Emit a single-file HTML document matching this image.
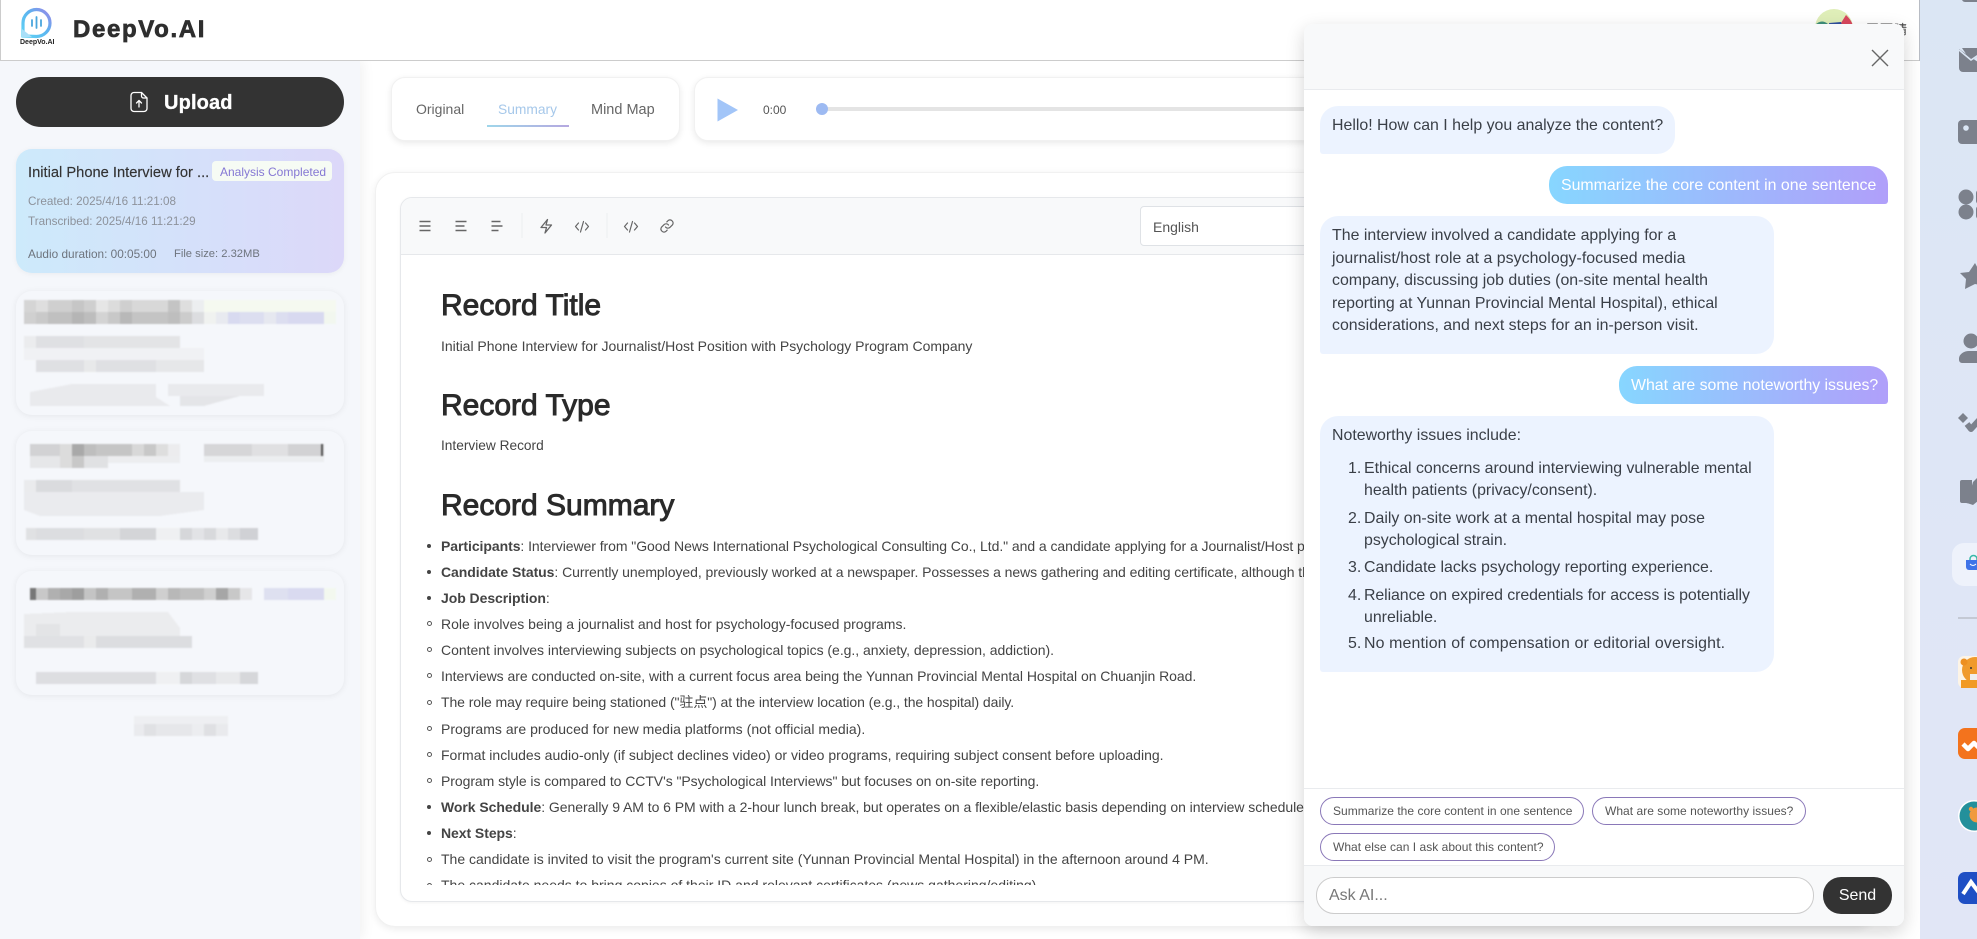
<!DOCTYPE html>
<html lang="en"><head><meta charset="utf-8"><title>DeepVo.AI</title>
<style>
*{box-sizing:border-box}
html,body{margin:0;padding:0;width:1977px;height:939px;overflow:hidden;background:#fff;font-family:"Liberation Sans","Noto Sans CJK SC",sans-serif;color:#333}
.a{position:absolute}
.t{position:absolute;white-space:nowrap}
b{font-weight:700}
.h{left:441px;font-size:30px;font-weight:400;color:#2a2a2a;-webkit-text-stroke:.95px #2a2a2a;line-height:36px;height:36px}
.l{left:39px;font-size:14px;line-height:26px;height:26px;color:#444;letter-spacing:-.06px}
.d{position:absolute;left:25px;width:4px;height:4px;border-radius:50%;background:#444}
.o{position:absolute;left:25px;width:5px;height:5px;border-radius:50%;border:1px solid #555}
.m{font-size:15.900px;line-height:22.5px;height:22.5px;color:#3a3f47}
.bot{position:absolute;left:1320px;background:#ecf3ff;border-radius:18px 18px 18px 3px}
.usr{position:absolute;right:89px;height:38px;background:linear-gradient(90deg,#87d6ff,#b09ffa);border-radius:18px 18px 3px 18px;color:#fff;font-size:15.900px;line-height:40px;padding:0 12px;white-space:nowrap}
.chip{position:absolute;height:28px;border:1px solid #8a78b8;border-radius:14px;font-size:12px;line-height:26px;padding:0 12px;color:#555;background:#fff;white-space:nowrap;letter-spacing:.03px}
</style></head><body>

<!-- page -->
<div class="a" style="left:0;top:0;width:1920px;height:939px;background:#fff"></div>

<!-- sidebar -->
<div class="a" style="left:0;top:60px;width:360px;height:879px;background:#f5f7fb;box-shadow:3px 0 12px rgba(0,0,0,.06)"></div>

<!-- header -->
<div class="a" style="left:0;top:0;width:1920px;height:61px;background:#fff;border:1px solid #ccc;border-top:0"></div>

<svg class="a" style="left:20px;top:7px" width="34" height="32" viewBox="0 0 34 32">
<defs><linearGradient id="lg" x1="0" y1="1" x2="1" y2="0"><stop offset="0" stop-color="#5fd4f5"/><stop offset=".55" stop-color="#5cb4ef"/><stop offset="1" stop-color="#9a86e8"/></linearGradient></defs>
<path d="M3 29V16A13.5 13.5 0 1 1 16.500 29.500Z" fill="#fff" stroke="url(#lg)" stroke-width="3.200"/>
<path d="M2 22L12 30H2Z" fill="#a9dff8"/>
<path d="M12 13v6M16.500 10v11M21 13v6" stroke="#4aa6dd" stroke-width="1.800" stroke-linecap="round"/>
</svg>
<div class="t" style="left:20px;top:38px;font-size:7px;font-weight:700;line-height:10px;color:#222">DeepVo.AI</div>
<div class="t" style="left:73px;top:15px;font-size:24px;font-weight:700;line-height:30px;letter-spacing:1.650px;color:#2e2e2e;-webkit-text-stroke:.7px #2e2e2e">DeepVo.AI</div>

<!-- avatar and name -->
<svg class="a" style="left:1815px;top:9px" width="38" height="24" viewBox="0 0 38 24">
<circle cx="19" cy="19" r="19" fill="#dfeeb8"/>
<path d="M0 16C6 10 12 12 17 20V38H0Z" fill="#3f8f7a"/><path d="M26 14L31 6C35 10 38 14 38 19V28H26Z" fill="#d9475d"/><path d="M14 14L26 13L29 24H15Z" fill="#2f4f9f"/>
</svg>
<div class="t" style="left:1866px;top:22px;font-size:13px;line-height:16px;color:#444;letter-spacing:1px">田雨晴</div>

<!-- upload -->
<div class="a" style="left:16px;top:77px;width:328px;height:50px;border-radius:25px;background:#333"></div>
<svg class="a" style="left:129px;top:91px" width="20" height="22" viewBox="0 0 20 22" fill="none" stroke="#fff" stroke-width="1.300" stroke-linecap="round" stroke-linejoin="round">
<path d="M12.500 1.500H5A3 3 0 0 0 2 4.500V17.500A3 3 0 0 0 5 20.500H15A3 3 0 0 0 18 17.500V7Z"/><path d="M12.500 1.500V5A2 2 0 0 0 14.500 7H18"/><path d="M10 16V9.500M7.500 12L10 9.500L12.500 12"/>
</svg>
<div class="t" style="left:164px;top:90px;font-size:20px;font-weight:700;line-height:26px;color:#fff;letter-spacing:.15px;-webkit-text-stroke:.3px #fff">Upload</div>

<!-- selected card -->
<div class="a" style="left:16px;top:149px;width:328px;height:124px;border-radius:16px;background:linear-gradient(90deg,#cdeafb,#dcd8f9);box-shadow:0 1px 6px rgba(0,0,0,.05)"></div>
<div class="t" style="left:28px;top:164px;font-size:14.700px;line-height:18px;color:#333;-webkit-text-stroke:.15px #333">Initial Phone Interview for ...</div>
<div class="a" style="left:212px;top:161px;width:120px;height:20px;background:#f6fbf4;border-radius:4px"></div>
<div class="t" style="left:220px;top:164px;font-size:12px;line-height:16px;color:#8578d4">Analysis Completed</div>
<div class="t" style="left:28px;top:194px;font-size:11.700px;line-height:16px;color:#8d929b">Created: 2025/4/16 11:21:08</div>
<div class="t" style="left:28px;top:214px;font-size:11.700px;line-height:16px;color:#8d929b">Transcribed: 2025/4/16 11:21:29</div>
<div class="t" style="left:28px;top:246px;font-size:11.800px;line-height:16px;color:#6e747d">Audio duration: 00:05:00</div>
<div class="t" style="left:174px;top:246px;font-size:11.200px;line-height:16px;color:#6e747d">File size: 2.32MB</div>

<!-- blurred cards -->
<div class="a" style="left:16px;top:291px;width:328px;height:124px;border-radius:16px;background:#f5f7fb;box-shadow:0 1px 7px rgba(0,0,0,.07)"></div>
<div class="a" style="left:16px;top:431px;width:328px;height:124px;border-radius:16px;background:#f5f7fb;box-shadow:0 1px 7px rgba(0,0,0,.07)"></div>
<div class="a" style="left:16px;top:571px;width:328px;height:124px;border-radius:16px;background:#f5f7fb;box-shadow:0 1px 7px rgba(0,0,0,.07)"></div>
<svg class="a" style="left:0;top:280px;filter:blur(.8px)" width="360" height="470" viewBox="0 280 360 470" shape-rendering="crispEdges">
<g>
<rect x="24" y="300" width="12" height="12" fill="#d5d5d5"/><rect x="36" y="300" width="12" height="12" fill="#dedede"/><rect x="48" y="300" width="24" height="12" fill="#cfcfcf"/><rect x="72" y="300" width="12" height="12" fill="#c6c6c6"/><rect x="84" y="300" width="12" height="12" fill="#cfcfcf"/><rect x="96" y="300" width="12" height="12" fill="#e6e6e6"/><rect x="108" y="300" width="12" height="12" fill="#dcdcdc"/><rect x="120" y="300" width="12" height="12" fill="#cfcfcf"/><rect x="132" y="300" width="36" height="12" fill="#d8d8d8"/><rect x="168" y="300" width="12" height="12" fill="#c4c4c4"/><rect x="180" y="300" width="12" height="12" fill="#dedede"/><rect x="192" y="300" width="12" height="12" fill="#eceef0"/><rect x="204" y="300" width="132" height="12" fill="#f5f9f0"/>
<rect x="24" y="312" width="12" height="12" fill="#d0d0d0"/><rect x="36" y="312" width="12" height="12" fill="#c9c9c9"/><rect x="48" y="312" width="24" height="12" fill="#c0c0c0"/><rect x="72" y="312" width="12" height="12" fill="#b5b5b5"/><rect x="84" y="312" width="12" height="12" fill="#bdbdbd"/><rect x="96" y="312" width="12" height="12" fill="#d3d3d3"/><rect x="108" y="312" width="12" height="12" fill="#c8c8c8"/><rect x="120" y="312" width="12" height="12" fill="#b8b8b8"/><rect x="132" y="312" width="36" height="12" fill="#c4c4c4"/><rect x="168" y="312" width="12" height="12" fill="#bebebe"/><rect x="180" y="312" width="12" height="12" fill="#cccccc"/><rect x="192" y="312" width="12" height="12" fill="#dcdde0"/><rect x="204" y="312" width="12" height="12" fill="#f0f2f0"/><rect x="216" y="312" width="12" height="12" fill="#e8eaf0"/><rect x="228" y="312" width="12" height="12" fill="#d8daf0"/><rect x="240" y="312" width="24" height="12" fill="#dcdef0"/><rect x="264" y="312" width="12" height="12" fill="#e6e8f0"/><rect x="276" y="312" width="12" height="12" fill="#dcdef0"/><rect x="288" y="312" width="36" height="12" fill="#d8d9f0"/><rect x="324" y="312" width="12" height="12" fill="#f2f7ef"/>
<rect x="24" y="336" width="12" height="12" fill="#ebecee"/><rect x="36" y="336" width="48" height="12" fill="#dfe0e3"/><rect x="84" y="336" width="96" height="12" fill="#e3e4e6"/>
<rect x="24" y="348" width="180" height="12" fill="#f0f1f4"/>
<rect x="36" y="360" width="48" height="12" fill="#dfe0e3"/><rect x="84" y="360" width="12" height="12" fill="#e8e9ea"/><rect x="96" y="360" width="60" height="12" fill="#dfe0e3"/><rect x="156" y="360" width="48" height="12" fill="#e6e7e9"/>
<path d="M30 392L72 384H156V397L170 406H30Z" fill="#e9eaed"/><rect x="168" y="384" width="96" height="12" fill="#e9eaed"/><path d="M180 396H240L204 406H180Z" fill="#e4e5e8"/>
</g>
<g>
<rect x="30" y="444" width="30" height="12" fill="#d2d2d4"/><rect x="60" y="444" width="12" height="12" fill="#dcdcdc"/><rect x="72" y="444" width="12" height="12" fill="#a9a9a9"/><rect x="84" y="444" width="12" height="12" fill="#bebebe"/><rect x="96" y="444" width="36" height="12" fill="#c5c5c5"/><rect x="132" y="444" width="12" height="12" fill="#d8d8d8"/><rect x="144" y="444" width="12" height="12" fill="#c8c8c8"/><rect x="156" y="444" width="12" height="12" fill="#dedede"/><rect x="168" y="444" width="12" height="12" fill="#ececee"/>
<rect x="204" y="444" width="48" height="12" fill="#d6d6d8"/><rect x="252" y="444" width="36" height="12" fill="#e0e0e2"/><rect x="288" y="444" width="36" height="12" fill="#d2d2d4"/><rect x="321" y="444" width="2" height="14" fill="#555"/>
<rect x="30" y="456" width="30" height="12" fill="#e6e7e9"/><rect x="60" y="456" width="12" height="12" fill="#dcdcdc"/><rect x="72" y="456" width="12" height="12" fill="#c8c8c8"/><rect x="84" y="456" width="24" height="12" fill="#e0e1e3"/><rect x="108" y="456" width="72" height="7" fill="#ecedef"/><rect x="204" y="456" width="120" height="6" fill="#eceef0"/>
<rect x="24" y="480" width="12" height="12" fill="#eaebed"/><rect x="36" y="480" width="36" height="12" fill="#dadbde"/><rect x="72" y="480" width="108" height="12" fill="#e0e1e4"/>
<path d="M24 492H204V510L160 516H40L24 510Z" fill="#eaebee"/>
<rect x="26" y="528" width="10" height="12" fill="#e0e1e3"/><rect x="36" y="528" width="48" height="12" fill="#dcdde0"/><rect x="84" y="528" width="36" height="12" fill="#e0e1e3"/><rect x="120" y="528" width="36" height="12" fill="#d4d5d8"/><rect x="156" y="528" width="24" height="12" fill="#eff0f2"/><rect x="180" y="528" width="12" height="12" fill="#d6d7da"/><rect x="192" y="528" width="12" height="12" fill="#e2e3e6"/><rect x="204" y="528" width="12" height="12" fill="#d8d9dc"/><rect x="216" y="528" width="12" height="12" fill="#e8e9eb"/><rect x="228" y="528" width="12" height="12" fill="#dcdde0"/><rect x="240" y="528" width="18" height="12" fill="#d0d1d5"/>
</g>
<g>
<rect x="30" y="588" width="6" height="12" fill="#777"/><rect x="36" y="588" width="12" height="12" fill="#c8c8c8"/><rect x="48" y="588" width="12" height="12" fill="#b0b0b0"/><rect x="60" y="588" width="12" height="12" fill="#a8a8a8"/><rect x="72" y="588" width="12" height="12" fill="#9e9e9e"/><rect x="84" y="588" width="12" height="12" fill="#c4c4c4"/><rect x="96" y="588" width="12" height="12" fill="#b0b0b0"/><rect x="108" y="588" width="24" height="12" fill="#c5c5c5"/><rect x="132" y="588" width="24" height="12" fill="#b0b0b0"/><rect x="156" y="588" width="12" height="12" fill="#cfcfcf"/><rect x="168" y="588" width="12" height="12" fill="#b8b8b8"/><rect x="180" y="588" width="24" height="12" fill="#bfbfbf"/><rect x="204" y="588" width="12" height="12" fill="#cfcfcf"/><rect x="216" y="588" width="12" height="12" fill="#a6a6a6"/><rect x="228" y="588" width="12" height="12" fill="#c8c8c8"/><rect x="240" y="588" width="12" height="12" fill="#e6e6e8"/><rect x="264" y="588" width="24" height="12" fill="#dee0f0"/><rect x="288" y="588" width="36" height="12" fill="#d9daf0"/><rect x="324" y="588" width="12" height="12" fill="#f3f8ef"/>
<path d="M24 614L72 612H168L180 628V636H24Z" fill="#ebecee"/><rect x="36" y="624" width="24" height="12" fill="#e3e4e6"/>
<rect x="24" y="636" width="60" height="12" fill="#e0e1e4"/><rect x="84" y="636" width="12" height="12" fill="#eaebec"/><rect x="96" y="636" width="96" height="12" fill="#dcdde0"/>
<rect x="36" y="672" width="120" height="12" fill="#dddee1"/><rect x="156" y="672" width="24" height="12" fill="#eff0f2"/><rect x="180" y="672" width="12" height="12" fill="#d6d7da"/><rect x="192" y="672" width="24" height="12" fill="#dfe0e3"/><rect x="216" y="672" width="24" height="12" fill="#e8e9eb"/><rect x="240" y="672" width="18" height="12" fill="#d6d7da"/>
</g>
<rect x="134" y="716" width="94" height="8" fill="#eeeff2"/><rect x="134" y="724" width="10" height="12" fill="#eaebee"/><rect x="144" y="724" width="12" height="12" fill="#e0e1e4"/><rect x="156" y="724" width="36" height="12" fill="#e6e7ea"/><rect x="192" y="724" width="12" height="12" fill="#ecedf0"/><rect x="204" y="724" width="12" height="12" fill="#dfe0e3"/><rect x="216" y="724" width="12" height="12" fill="#e9eaed"/>
</svg>

<!-- tabs -->
<div class="a" style="left:391px;top:77px;width:289px;height:64px;background:#fff;border-radius:14px;border:1px solid #f1f1f1;box-shadow:0 2px 7px rgba(0,0,0,.09)"></div>
<div class="t" style="left:416px;top:100px;font-size:14px;line-height:18px;color:#666">Original</div>
<div class="t" style="left:498px;top:100.500px;font-size:13.800px;line-height:18px;color:#a6c8ea">Summary</div>
<div class="t" style="left:591px;top:101px;font-size:14.500px;line-height:18px;color:#666">Mind Map</div>
<div class="a" style="left:487px;top:125px;width:82px;height:2px;background:linear-gradient(90deg,#9fd6ea,#b5a8e0)"></div>

<!-- player -->
<div class="a" style="left:694px;top:77px;width:700px;height:64px;background:#fff;border-radius:14px;border:1px solid #f1f1f1;box-shadow:0 2px 7px rgba(0,0,0,.09)"></div>
<svg class="a" style="left:716px;top:97px" width="23" height="26" viewBox="0 0 23 26"><path d="M1.500 1.500V24.500L22 13Z" fill="#a2c5f8"/></svg>
<div class="t" style="left:763px;top:102px;font-size:12px;line-height:16px;color:#555">0:00</div>
<div class="a" style="left:822px;top:107px;width:500px;height:4px;border-radius:2px;background:#e4e4e4"></div>
<div class="a" style="left:816px;top:103px;width:12px;height:12px;border-radius:50%;background:#9dbaf2"></div>

<!-- main card -->
<div class="a" style="left:375px;top:172px;width:1500px;height:755px;background:#fff;border-radius:20px;border:1px solid #f1f1f1;box-shadow:0 2px 8px rgba(0,0,0,.08)"></div>
<div class="a" style="left:400px;top:197px;width:1450px;height:705px;background:#fff;border-radius:12px;border:1px solid #e6e8eb;box-shadow:0 1px 3px rgba(0,0,0,.05)"></div>
<div class="a" style="left:401px;top:198px;width:1448px;height:57px;background:#f8f9fa;border-radius:11px 11px 0 0;border-bottom:1px solid #e6e8eb"></div>
<svg class="a" style="left:402px;top:198px" width="300" height="57" viewBox="402 198 300 57" fill="none" stroke="#666" stroke-width="1.300" stroke-linejoin="round">
<path d="M419.500 221.500H430.500M419.500 226H430.500M419.500 230.500H430.500" stroke-width="1.500"/>
<path d="M455.500 221.500H466.500M455.500 226H464.500M455.500 230.500H466.500" stroke-width="1.500"/>
<path d="M491.500 221.500H500.500M491.500 226H502.500M491.500 230.500H498.500" stroke-width="1.500"/>
<path d="M522 213V238M607 213V238" stroke="#eceef0" stroke-width="1"/>
<path d="M547.500 219.500L541 227.500H546.500L545 233L551.500 225H546Z" stroke-linecap="round"/>
<path d="M578.500 223L575.500 226.500L578.500 230M585.500 223L588.500 226.500L585.500 230M583.500 221.500L580.500 232" stroke-width="1.200" stroke-linecap="round"/>
<path d="M627.500 223L624.500 226.500L627.500 230M634.500 223L637.500 226.500L634.500 230M632.500 221.500L629.500 232" stroke-width="1.200" stroke-linecap="round"/>
<path d="M665.500 227A3 3 0 0 0 670 227.300L672.500 224.800A3.100 3.100 0 0 0 668.200 220.500L666.800 221.900M668.500 225A3 3 0 0 0 664 224.700L661.500 227.200A3.100 3.100 0 0 0 665.800 231.500L667.200 230.100" stroke-width="1.200" stroke-linecap="round"/>
</svg>
<div class="a" style="left:1140px;top:206px;width:300px;height:40px;background:#fff;border:1px solid #dfe2e6;border-radius:4px"></div>
<div class="t" style="left:1153px;top:218px;font-size:14px;line-height:18px;color:#555">English</div>

<div class="t h" style="top:288px">Record Title</div>
<div class="t" style="left:441px;top:337px;font-size:14px;line-height:18px;color:#444;letter-spacing:-.02px">Initial Phone Interview for Journalist/Host Position with Psychology Program Company</div>
<div class="t h" style="top:388px">Record Type</div>
<div class="t" style="left:441px;top:437px;font-size:13.700px;line-height:18px;color:#444">Interview Record</div>
<div class="t h" style="top:488px">Record Summary</div>

<div class="a" style="left:402px;top:529px;width:920px;height:356px;overflow:hidden">
<div class="d" style="top:15px"></div><div class="t l" style="top:4px"><b>Participants</b>: Interviewer from "Good News International Psychological Consulting Co., Ltd." and a candidate applying for a Journalist/Host position.</div>
<div class="d" style="top:41px"></div><div class="t l" style="top:30px"><b>Candidate Status</b>: Currently unemployed, previously worked at a newspaper. Possesses a news gathering and editing certificate, although the certificate has expired.</div>
<div class="d" style="top:67px"></div><div class="t l" style="top:56px"><b>Job Description</b>:</div>
<div class="o" style="top:92px"></div><div class="t l" style="top:82px;letter-spacing:0">Role involves being a journalist and host for psychology-focused programs.</div>
<div class="o" style="top:118px"></div><div class="t l" style="top:108px;letter-spacing:-.03px">Content involves interviewing subjects on psychological topics (e.g., anxiety, depression, addiction).</div>
<div class="o" style="top:144px"></div><div class="t l" style="top:134px;letter-spacing:-.04px">Interviews are conducted on-site, with a current focus area being the Yunnan Provincial Mental Hospital on Chuanjin Road.</div>
<div class="o" style="top:171px"></div><div class="t l" style="top:160px;letter-spacing:-.08px">The role may require being stationed ("驻点") at the interview location (e.g., the hospital) daily.</div>
<div class="o" style="top:197px"></div><div class="t l" style="top:187px;letter-spacing:.03px">Programs are produced for new media platforms (not official media).</div>
<div class="o" style="top:223px"></div><div class="t l" style="top:213px;letter-spacing:.01px">Format includes audio-only (if subject declines video) or video programs, requiring subject consent before uploading.</div>
<div class="o" style="top:249px"></div><div class="t l" style="top:239px">Program style is compared to CCTV's "Psychological Interviews" but focuses on on-site reporting.</div>
<div class="d" style="top:276px"></div><div class="t l" style="top:265px;letter-spacing:-.05px"><b>Work Schedule</b>: Generally 9 AM to 6 PM with a 2-hour lunch break, but operates on a flexible/elastic basis depending on interview schedules.</div>
<div class="d" style="top:302px"></div><div class="t l" style="top:291px"><b>Next Steps</b>:</div>
<div class="o" style="top:328px"></div><div class="t l" style="top:317px;letter-spacing:0">The candidate is invited to visit the program's current site (Yunnan Provincial Mental Hospital) in the afternoon around 4 PM.</div>
<div class="o" style="top:354px"></div><div class="t l" style="top:343px;letter-spacing:0">The candidate needs to bring copies of their ID and relevant certificates (news gathering/editing).</div>
</div>

<!-- chat panel -->
<div class="a" style="left:1304px;top:24px;width:600px;height:902px;background:#fff;border-radius:9px;box-shadow:0 6px 18px rgba(0,0,0,.17)"></div>
<div class="a" style="left:1304px;top:24px;width:600px;height:66px;background:#f8f9fa;border-radius:9px 9px 0 0;border-bottom:1px solid #e9ebee"></div>
<svg class="a" style="left:1870px;top:48px" width="20" height="20" viewBox="0 0 20 20"><path d="M2 2L18 18M18 2L2 18" stroke="#666" stroke-width="1.400" fill="none"/></svg>

<div class="bot" style="top:106px;width:355px;height:48px"></div>
<div class="t m" style="left:1332px;top:115px">Hello! How can I help you analyze the content?</div>
<div class="usr" style="top:166px;width:339px">Summarize the core content in one sentence</div>
<div class="bot" style="top:216px;width:454px;height:138px"></div>
<div class="t m" style="left:1332px;top:225px;letter-spacing:.01px">The interview involved a candidate applying for a</div>
<div class="t m" style="left:1332px;top:248px;letter-spacing:.02px">journalist/host role at a psychology-focused media</div>
<div class="t m" style="left:1332px;top:270px">company, discussing job duties (on-site mental health</div>
<div class="t m" style="left:1332px;top:293px">reporting at Yunnan Provincial Mental Hospital), ethical</div>
<div class="t m" style="left:1332px;top:315px">considerations, and next steps for an in-person visit.</div>
<div class="usr" style="top:366px;width:269px;letter-spacing:-.03px">What are some noteworthy issues?</div>
<div class="bot" style="top:416px;width:454px;height:256px"></div>
<div class="t m" style="left:1332px;top:425px">Noteworthy issues include:</div>
<div class="t m" style="left:1348px;top:458px">1.</div><div class="t m" style="left:1364px;top:458px;letter-spacing:-.02px">Ethical concerns around interviewing vulnerable mental</div>
<div class="t m" style="left:1364px;top:480px">health patients (privacy/consent).</div>
<div class="t m" style="left:1348px;top:508px">2.</div><div class="t m" style="left:1364px;top:508px">Daily on-site work at a mental hospital may pose</div>
<div class="t m" style="left:1364px;top:530px">psychological strain.</div>
<div class="t m" style="left:1348px;top:557px">3.</div><div class="t m" style="left:1364px;top:557px;letter-spacing:-.03px">Candidate lacks psychology reporting experience.</div>
<div class="t m" style="left:1348px;top:585px">4.</div><div class="t m" style="left:1364px;top:585px;letter-spacing:-.08px">Reliance on expired credentials for access is potentially</div>
<div class="t m" style="left:1364px;top:607px">unreliable.</div>
<div class="t m" style="left:1348px;top:633px">5.</div><div class="t m" style="left:1364px;top:633px;letter-spacing:.14px">No mention of compensation or editorial oversight.</div>

<div class="a" style="left:1304px;top:788px;width:600px;height:1px;background:#e9ebee"></div>
<div class="chip" style="left:1320px;top:797px;width:264px">Summarize the core content in one sentence</div>
<div class="chip" style="left:1592px;top:797px;width:214px">What are some noteworthy issues?</div>
<div class="chip" style="left:1320px;top:833px;width:235px">What else can I ask about this content?</div>

<div class="a" style="left:1304px;top:865px;width:600px;height:61px;background:#f8f9fa;border-top:1px solid #e9ebee;border-radius:0 0 9px 9px"></div>
<div class="a" style="left:1316px;top:877px;width:498px;height:37px;background:#fff;border:1px solid #ccc;border-radius:18px"></div>
<div class="t" style="left:1329px;top:886px;font-size:16px;line-height:20px;color:#777">Ask AI...</div>
<div class="a" style="left:1823px;top:877px;width:69px;height:37px;background:#333;border-radius:18px;color:#fff;font-size:16px;line-height:37px;text-align:center">Send</div>

<!-- right desktop rail -->
<div class="a" style="left:1920px;top:0;width:57px;height:939px;background:linear-gradient(180deg,#dbe6f4,#dfe6f6 60%,#e1e6f6);overflow:hidden">
<svg width="57" height="939" viewBox="1920 0 57 939" style="position:absolute;left:0;top:0">
<rect x="1962" y="-8" width="20" height="10" rx="3" fill="#7c818c"/>
<path d="M1959 49L1978 62V72H1963A4 4 0 0 1 1959 68Z" fill="#7c818c"/><path d="M1962 48H1980V55L1971 61Z" fill="#7c818c"/><path d="M1959 50L1971 60L1980 54" stroke="#dbe6f4" stroke-width="1.600" fill="none"/>
<rect x="1958" y="120" width="30" height="24" rx="4" fill="#7c818c"/><circle cx="1966" cy="128" r="2.800" fill="#dbe6f4"/>
<circle cx="1966" cy="197" r="7.500" fill="#7c818c"/><circle cx="1966" cy="212" r="7.500" fill="#7c818c"/><rect x="1976" y="190" width="6" height="14" rx="3" fill="#7c818c"/><rect x="1976" y="206" width="6" height="13" rx="3" fill="#7c818c"/>
<path d="M1975 263L1982 276L1990 278V287L1975 284L1965 289L1966 279L1960 273L1969 272Z" fill="#7c818c"/>
<circle cx="1971" cy="341" r="7.500" fill="#7c818c"/><path d="M1959 358A10 8 0 0 1 1969 351H1985V363H1962A3 3 0 0 1 1959 360Z" fill="#7c818c"/>
<path d="M1958 418L1963 413L1968 418L1963 423Z" fill="#7c818c"/><path d="M1967 424L1971 429L1982 417" stroke="#7c818c" stroke-width="6" fill="none" stroke-linejoin="round"/>
<path d="M1960 482A2 2 0 0 1 1962 480H1972V504L1966 503H1962A2 2 0 0 1 1960 501Z" fill="#7c818c"/><path d="M1973 482L1978 477V501L1973 505L1967 503Z" fill="#7c818c"/>
<rect x="1952" y="543" width="40" height="43" rx="12" fill="#eef2fb"/>
<path d="M1966 560H1984V570H1969A3 3 0 0 1 1966 567Z" fill="#3f73e8"/><path d="M1970 560V559A3.500 3.500 0 0 1 1977 559V560" stroke="#39b8a8" stroke-width="1.500" fill="none"/><path d="M1970 564Q1973 567 1976 564" stroke="#fff" stroke-width="1" fill="none"/>
<rect x="1958" y="617" width="30" height="2" fill="#c4c9d4"/>
<rect x="1958" y="656" width="30" height="32" rx="6" fill="#fdf4e6"/>
<circle cx="1975" cy="670" r="13" fill="#f09a2c"/><circle cx="1964" cy="662" r="3.500" fill="#ed8f20"/><path d="M1961 680H1985V688H1961Z" fill="#f19a24"/><rect x="1970" y="674" width="9" height="6" fill="#eee"/><circle cx="1971" cy="668" r="1" fill="#333"/>
<rect x="1958" y="728" width="30" height="31" rx="7" fill="#f3731d"/>
<path d="M1963 744L1968 749L1974 743L1979 748L1988 739" stroke="#fff" stroke-width="4.500" fill="none" stroke-linejoin="round"/>
<circle cx="1974" cy="816" r="16" fill="#fff"/><circle cx="1974" cy="816" r="14.500" fill="#23909b"/><circle cx="1977" cy="815" r="7.500" fill="#f09a3e"/><circle cx="1971" cy="809" r="2.200" fill="#f09a3e"/>
<rect x="1958" y="872" width="30" height="32" rx="7" fill="#1f4fc4"/>
<path d="M1963 894L1971 882L1980 894" stroke="#fff" stroke-width="4" fill="none"/>
</svg>
</div>
<div class="a" style="left:1919px;top:0;width:1px;height:61px;background:#b8bcc4"></div>

</body></html>
